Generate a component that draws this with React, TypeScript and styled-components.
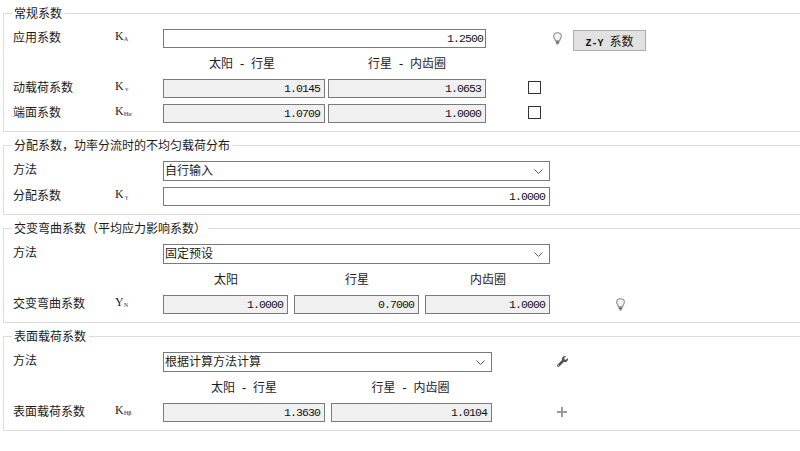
import styled, { createGlobalStyle } from "styled-components";
import { FaWrench } from "react-icons/fa";

const GlobalStyle = createGlobalStyle`
  html, body {
    margin: 0;
    padding: 0;
    background: #fff;
  }
  body {
    font-family: "Noto Sans CJK SC", "Liberation Sans", sans-serif;
    font-size: 12px;
    color: #1a1a1a;
  }
`;

const Page = styled.div`
  width: 800px;
  height: 451px;
  padding: 5px 0 0 3px;
  box-sizing: border-box;
  overflow: hidden;
`;

const Group = styled.fieldset`
  margin: 0 0 5px;
  padding: 8px 0 8px 0;
  min-inline-size: 0;
  border: 1px solid #dcdcdc;
  border-right: none;
`;

const Legend = styled.legend`
  margin-left: 8px;
  padding: 0 3px 0 2px;
  height: 16px;
  line-height: 16px;
`;

const Row = styled.div<{ $top?: number }>`
  display: flex;
  align-items: flex-start;
  height: 19px;
  padding-left: 9px;
  margin-top: ${(p) => p.$top ?? 0}px;
`;

const TallRow = styled(Row)`
  height: 20px;
`;

const Label = styled.div`
  width: 102px;
  flex: none;
  line-height: 15px;
`;

const Symbol = styled.div`
  width: 48px;
  flex: none;
  font-family: "Liberation Serif", serif;
  font-size: 12px;
  line-height: 15px;
  color: #222;

  sub {
    font-size: 6px;
    font-weight: bold;
    color: #4a6f9c;
    vertical-align: -1px;
  }
`;

const Headers = styled.div<{ $height: number }>`
  display: flex;
  height: ${(p) => p.$height}px;
  padding-left: 160px;
`;

const Header = styled.div<{ $width: number; $gap?: number }>`
  width: ${(p) => p.$width}px;
  margin-right: ${(p) => p.$gap ?? 0}px;
  text-align: center;
  font-family: "Liberation Mono", "Noto Sans CJK SC", monospace;
  word-spacing: -1.8px;
  line-height: 17px;
  padding-top: 9px;
  white-space: pre;
`;

const Field = styled.div<{ $width: number; $readOnly?: boolean; $gap?: number; $pad?: number }>`
  width: ${(p) => p.$width}px;
  height: 19px;
  flex: none;
  box-sizing: border-box;
  margin-right: ${(p) => p.$gap ?? 0}px;
  padding-right: ${(p) => p.$pad ?? 4}px;
  border: 1px solid #7a7a7a;
  background: ${(p) => (p.$readOnly ? "#f0f0f0" : "#fff")};
  font-family: "Liberation Mono", monospace;
  font-size: 11.5px;
  letter-spacing: -0.9px;
  line-height: 18px;
  text-align: right;
  color: #111;
`;

const Select = styled.div<{ $width: number }>`
  display: flex;
  align-items: center;
  justify-content: space-between;
  width: ${(p) => p.$width}px;
  height: 20px;
  flex: none;
  box-sizing: border-box;
  padding: 0 6px 0 1px;
  border: 1px solid #7a7a7a;
  background: #fff;
`;

const SelectText = styled.span`
  line-height: 15px;
  padding-bottom: 3px;
`;

const Check = styled.div<{ $left: number }>`
  width: 13px;
  height: 13px;
  flex: none;
  box-sizing: border-box;
  margin: 2px 0 0 ${(p) => p.$left}px;
  border: 1px solid #333;
  background: #fff;
`;

const ActionButton = styled.div`
  width: 73px;
  height: 21px;
  flex: none;
  box-sizing: border-box;
  margin: 1px 0 0 11px;
  border: 1px solid #adadad;
  background: #e1e1e1;
  text-align: center;
  line-height: 19px;
  white-space: pre;
  font-size: 10px;
  font-weight: bold;
  font-family: "Liberation Mono", monospace;
  color: #111;

  span {
    font-family: "Noto Sans CJK SC", sans-serif;
    font-size: 12px;
    font-weight: normal;
  }
`;

const IconSlot = styled.div<{ $left: number; $top: number }>`
  display: flex;
  flex: none;
  margin: ${(p) => p.$top}px 0 0 ${(p) => p.$left}px;
`;

const Bulb = () => (
  <svg width="9" height="13" viewBox="0 0 9 13" fill="none">
    <path
      d="M4.5 .7C2.2 .7 .7 2.2 .7 4.2c0 1.7 1.4 2.7 1.7 4.6h4.2c.3-1.9 1.7-2.9 1.7-4.6C8.6 2.2 6.8 .7 4.5 .7z"
      fill="#f4f4f4"
      stroke="#8c8c8c"
      strokeWidth="1.1"
    />
    <rect x="2.7" y="9.2" width="3.6" height="2" fill="#6e6e6e" />
    <rect x="3.5" y="11.2" width="2" height="1.3" fill="#6e6e6e" />
  </svg>
);

const Chevron = () => (
  <svg width="9" height="5" viewBox="0 0 9 5" fill="none">
    <polyline points=".5,.5 4.5,4.5 8.5,.5" stroke="#555" strokeWidth="1" />
  </svg>
);

const Plus = () => (
  <svg width="10" height="10" viewBox="0 0 10 10">
    <rect x="4" y="0" width="2" height="10" fill="#9a9a9a" />
    <rect x="0" y="4" width="10" height="2" fill="#9a9a9a" />
  </svg>
);

export default function App() {
  return (
    <Page>
      <GlobalStyle />
      <Group>
        <Legend>常规系数</Legend>
        <Row>
          <Label>应用系数</Label>
          <Symbol>K<sub>A</sub></Symbol>
          <Field $width={323} $pad={2}>1.2500</Field>
          <IconSlot $left={67} $top={3}><Bulb /></IconSlot>
          <ActionButton>Z-Y <span>系数</span></ActionButton>
        </Row>
        <Headers $height={31}>
          <Header $width={156} $gap={9}>太阳 - 行星</Header>
          <Header $width={156}>行星 - 内齿圈</Header>
        </Headers>
        <Row>
          <Label>动载荷系数</Label>
          <Symbol>K<sub> v</sub></Symbol>
          <Field $width={162} $gap={3} $readOnly>1.0145</Field>
          <Field $width={158} $readOnly>1.0653</Field>
          <Check $left={42} />
        </Row>
        <Row $top={6}>
          <Label>端面系数</Label>
          <Symbol>K<sub>Hα</sub></Symbol>
          <Field $width={162} $gap={3} $readOnly>1.0709</Field>
          <Field $width={158} $readOnly>1.0000</Field>
          <Check $left={42} />
        </Row>
      </Group>

      <Group>
        <Legend>分配系数，功率分流时的不均匀载荷分布</Legend>
        <TallRow>
          <Label>方法</Label>
          <Symbol />
          <Select $width={387}><SelectText>自行输入</SelectText><Chevron /></Select>
        </TallRow>
        <Row $top={6}>
          <Label>分配系数</Label>
          <Symbol>K<sub> γ</sub></Symbol>
          <Field $width={387}>1.0000</Field>
        </Row>
      </Group>

      <Group>
        <Legend>交变弯曲系数（平均应力影响系数）</Legend>
        <TallRow>
          <Label>方法</Label>
          <Symbol />
          <Select $width={387}><SelectText>固定预设</SelectText><Chevron /></Select>
        </TallRow>
        <Headers $height={31}>
          <Header $width={124} $gap={7}>太阳</Header>
          <Header $width={124} $gap={7}>行星</Header>
          <Header $width={124}>内齿圈</Header>
        </Headers>
        <Row>
          <Label>交变弯曲系数</Label>
          <Symbol>Y<sub>N</sub></Symbol>
          <Field $width={125} $gap={6} $readOnly>1.0000</Field>
          <Field $width={125} $gap={6} $readOnly>0.7000</Field>
          <Field $width={125} $readOnly>1.0000</Field>
          <IconSlot $left={66} $top={3}><Bulb /></IconSlot>
        </Row>
      </Group>

      <Group>
        <Legend>表面载荷系数</Legend>
        <TallRow>
          <Label>方法</Label>
          <Symbol />
          <Select $width={329}><SelectText>根据计算方法计算</SelectText><Chevron /></Select>
          <IconSlot $left={65} $top={4}><FaWrench size={11} color="#555" /></IconSlot>
        </TallRow>
        <Headers $height={31}>
          <Header $width={160} $gap={8}>太阳 - 行星</Header>
          <Header $width={157}>行星 - 内齿圈</Header>
        </Headers>
        <Row>
          <Label>表面载荷系数</Label>
          <Symbol>K<sub>Hβ</sub></Symbol>
          <Field $width={162} $gap={6} $readOnly>1.3630</Field>
          <Field $width={161} $readOnly>1.0104</Field>
          <IconSlot $left={65} $top={4}><Plus /></IconSlot>
        </Row>
      </Group>
    </Page>
  );
}
